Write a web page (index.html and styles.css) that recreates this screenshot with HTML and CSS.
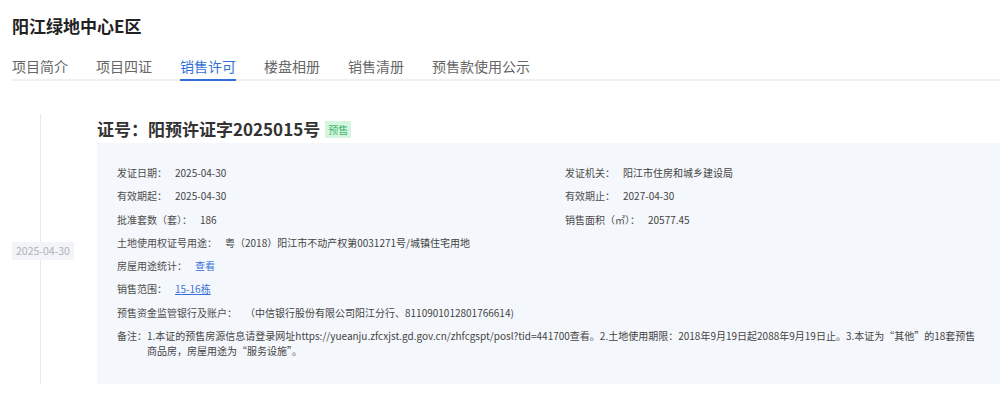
FILE: index.html
```html
<!DOCTYPE html>
<html lang="zh-CN">

    <head>
        <meta charset="UTF-8">
        <meta name="viewport" content="width=device-width, initial-scale=1.0">
        <title>阳江绿地中心E区 - 销售许可</title>
        <link rel="stylesheet" href="styles.css">
    </head>

    <body>
        <div class="page">
            <h1 class="project-title">阳江绿地中心E区</h1>

            <ul class="tabs">
                <li>项目简介</li>
                <li>项目四证</li>
                <li class="active">销售许可</li>
                <li>楼盘相册</li>
                <li>销售清册</li>
                <li>预售款使用公示</li>
            </ul>

            <div class="timeline-item">
                <div class="time-col">
                    <span class="time-tag">2025-04-30</span>
                </div>
                <div class="content-col">
                    <h2 class="cert-title">证号：阳预许证字2025015号 <span class="badge">预售</span></h2>
                    <div class="info-panel">
                        <div class="row"><span class="label">发证日期：</span><span class="value">2025-04-30</span></div>
                        <div class="row"><span class="label">发证机关：</span><span class="value">阳江市住房和城乡建设局</span></div>
                        <div class="row"><span class="label">有效期起：</span><span class="value">2025-04-30</span></div>
                        <div class="row"><span class="label">有效期止：</span><span class="value">2027-04-30</span></div>
                        <div class="row"><span class="label">批准套数（套）：</span><span class="value">186</span></div>
                        <div class="row"><span class="label">销售面积（㎡）：</span><span class="value">20577.45</span></div>
                        <div class="row full"><span class="label">土地使用权证号用途：</span><span class="value">粤（2018）阳江市不动产权第0031271号/城镇住宅用地</span></div>
                        <div class="row full"><span class="label">房屋用途统计：</span><a class="link">查看</a></div>
                        <div class="row full"><span class="label">销售范围：</span><a class="link underline">15-16栋</a></div>
                        <div class="row full"><span class="label">预售资金监管银行及账户：</span><span class="value">（中信银行股份有限公司阳江分行、8110901012801766614)</span></div>
                        <div class="row full note"><span class="label">备注：</span><span class="value">1.本证的预售房源信息请登录网址https://yueanju.zfcxjst.gd.gov.cn/zhfcgspt/posl?tid=441700查看。2.土地使用期限：2018年9月19日起2088年9月19日止。3.本证为“其他”的18套预售商品房，房屋用途为“服务设施”。</span></div>
                    </div>
                </div>
            </div>
        </div>
    </body>

</html>
```

FILE: styles.css
```css
html,
body {
    margin: 0;
    overflow: hidden;
}

body {
    font-family: "Noto Sans CJK SC", "Noto Sans", sans-serif;
    background-color: #fff;
    color: #333;
}

.page {
    padding-left: 12px;
}

.project-title {
    margin: 0;
    padding-top: 14px;
    font-size: 17px;
    line-height: 24px;
    font-weight: bold;
    color: #222;
}

.tabs {
    list-style: none;
    margin: 18px 0 0;
    padding: 0;
    display: flex;
    gap: 28px;
    border-bottom: 2px solid #eef0f3;
}

.tabs li {
    font-size: 14px;
    line-height: 20px;
    padding-bottom: 3px;
    margin-bottom: -2px;
    color: #666;
    border-bottom: 2px solid transparent;
}

.tabs li.active {
    color: #3370d6;
    border-bottom-color: #3370d6;
}

/* 时间轴 */
.timeline-item {
    display: grid;
    grid-template-columns: 85px 1fr;
    margin-top: 36px;
}

.time-col {
    position: relative;
    display: flex;
    align-items: center;
}

.time-col::before {
    content: "";
    position: absolute;
    left: 28px;
    top: -3px;
    bottom: -20px;
    width: 1px;
    background: #e6e8ec;
}

.time-tag {
    position: relative;
    background: #f2f4f7;
    color: #aeb3ba;
    font-size: 10.5px;
    line-height: 18px;
    padding: 0 4px;
}

.cert-title {
    margin: 0 0 2px;
    font-size: 17px;
    line-height: 24px;
    font-weight: bold;
    color: #333;
    display: flex;
    align-items: center;
    gap: 5px;
}

.badge {
    font-size: 10px;
    font-weight: normal;
    line-height: 17px;
    padding: 0 3px;
    background: #d5f5df;
    color: #3fb56c;
}

.info-panel {
    background: #f4f7fb;
    padding: 22px 20px 26px;
    display: grid;
    grid-template-columns: 448px 1fr;
    row-gap: 8.3px;
    font-size: 10px;
    line-height: 15px;
}

.row {
    display: flex;
}

.row.full {
    grid-column: 1 / -1;
}

.label {
    color: #4d4d4d;
    margin-right: 8px;
    white-space: nowrap;
}

.value {
    color: #444;
}

.note .label {
    margin-right: 0;
}

.link {
    color: #3a70d8;
    cursor: pointer;
}

.link.underline {
    text-decoration: underline;
}
```
